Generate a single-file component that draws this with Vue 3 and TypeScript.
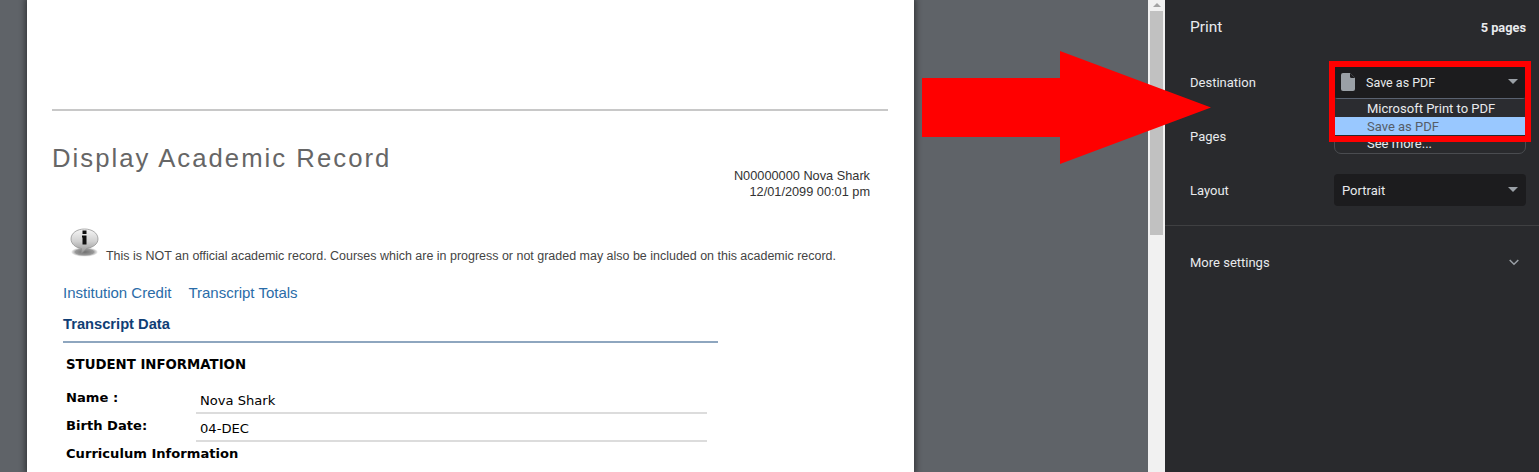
<template>
  <div class="viewer">
    <div class="preview">
      <main class="sheet">
        <hr class="top-rule" />
        <div class="title-row">
          <h1>Display Academic Record</h1>
          <div class="who">
            <div>N00000000 Nova Shark</div>
            <div>12/01/2099 00:01 pm</div>
          </div>
        </div>
        <div class="notice">
          <svg class="info" width="30" height="30" viewBox="0 0 30 30">
            <defs>
              <linearGradient id="bub" x1="0" y1="0" x2="0" y2="1">
                <stop offset="0" stop-color="#f6f6f6" />
                <stop offset="0.5" stop-color="#d0d0d0" />
                <stop offset="1" stop-color="#8d8d8d" />
              </linearGradient>
              <radialGradient id="shade">
                <stop offset="0" stop-color="#6f6f6f" />
                <stop offset="0.7" stop-color="#999" />
                <stop offset="1" stop-color="#bbb" stop-opacity="0.3" />
              </radialGradient>
            </defs>
            <ellipse cx="14.500" cy="24" rx="13" ry="4.500" fill="url(#shade)" />
            <path d="M14.500 1C7 1 1 5 1 11c0 5 5 9 10.500 9.500L11 26l6-5.600C23 19.500 28 16 28 11 28 5 22 1 14.500 1z" fill="url(#bub)" stroke="#8a8a8a" stroke-width="0.7" />
            <rect x="12.500" y="2.500" width="4" height="3.500" fill="#111" />
            <path d="M12 7.500h4.500v9h-4v-7H12z" fill="#111" />
          </svg>
          <span>This is NOT an official academic record. Courses which are in progress or not graded may also be included on this academic record.</span>
        </div>
        <nav class="links">
          <a>Institution Credit</a>
          <a>Transcript Totals</a>
        </nav>
        <h2>Transcript Data</h2>
        <section class="record">
          <h3>STUDENT INFORMATION</h3>
          <div v-for="row in rows" :key="row.label" class="rec-row">
            <div class="rec-label">{{ row.label }}</div>
            <div class="rec-value">{{ row.value }}</div>
          </div>
          <h3 class="curriculum">Curriculum Information</h3>
        </section>
      </main>
    </div>

    <div class="scrollbar">
      <div class="up"></div>
      <div class="thumb"></div>
    </div>

    <aside class="side">
      <header class="side-head">
        <span class="print">Print</span>
        <span class="count">5 pages</span>
      </header>
      <div class="setting">
        <label>Destination</label>
        <div class="select">
          <svg class="doc" width="14" height="18" viewBox="0 0 14 18">
            <path d="M2 0h7l5 5v11a2 2 0 0 1-2 2H2a2 2 0 0 1-2-2V2a2 2 0 0 1 2-2z" fill="#9aa0a6" />
            <path d="M9 0v3.500A1.500 1.500 0 0 0 10.500 5H14z" fill="#1c1c1e" />
          </svg>
          <span class="dest">Save as PDF</span>
          <i class="caret"></i>
        </div>
      </div>
      <div class="setting">
        <label>Pages</label>
        <div class="select ghost"></div>
      </div>
      <div class="setting">
        <label>Layout</label>
        <div class="select"><span>Portrait</span><i class="caret"></i></div>
      </div>
      <div class="more">
        <span>More settings</span>
        <svg width="10" height="7" viewBox="0 0 10 7"><path d="M.7 1 5 5.300 9.300 1" fill="none" stroke="#9aa0a6" stroke-width="1.500" /></svg>
      </div>

      <div class="dropdown">
        <div class="opt top">Microsoft Print to PDF</div>
        <div class="opt sel">Save as PDF</div>
        <div class="opt">See more...</div>
      </div>
      <div class="red-box"></div>
    </aside>

    <svg class="arrow" width="290" height="113" viewBox="0 0 290 113">
      <path d="M0 27h138V0l151 56.500-151 56.500V86H0z" fill="#ff0000" />
    </svg>
  </div>
</template>

<script setup lang="ts">
const rows = [
  { label: "Name :", value: "Nova Shark" },
  { label: "Birth Date:", value: "04-DEC" },
];
</script>

<style>
html, body { margin: 0; overflow: hidden; }
</style>

<style scoped>
.viewer { position: relative; display: flex; width: 1539px; height: 472px; overflow: hidden; background: #5f6368; }
.preview { width: 1148px; padding-left: 27px; box-sizing: border-box; flex: none; }
.sheet { width: 887px; height: 472px; box-sizing: border-box; background: #fff; padding: 109px 0 0 25px; box-shadow: 0 0 6px 2px rgba(0,0,0,.45); font-family: "Liberation Sans", Arial, sans-serif; overflow: hidden; }
.top-rule { width: 836px; height: 2px; margin: 0; border: 0; background: #c8c8c8; }
.title-row { display: flex; width: 818px; justify-content: space-between; align-items: flex-start; }
h1 { margin: 32px 0 0; font-size: 25.700px; line-height: 30px; font-weight: 400; letter-spacing: 2.03px; color: #666; }
.who { margin-top: 57px; font-size: 12.750px; line-height: 16px; text-align: right; color: #333; }
.notice { display: flex; align-items: flex-end; margin: 26px 0 0 18px; font-size: 12.470px; color: #444; height: 38px; }
.info { flex: none; margin-right: 6px; margin-bottom: 6px; }
.notice span { line-height: 15px; }
.links { display: flex; gap: 17px; margin: 20px 0 0 11px; font-size: 15px; line-height: 18px; color: #2a6ca8; }
h2 { width: 655px; margin: 13px 0 0 11px; padding-bottom: 8px; border-bottom: 2px solid #8ea6bf; font-size: 14.700px; line-height: 18px; font-weight: 700; color: #0f3e75; }
.record { margin-left: 14px; width: 641px; font-family: "DejaVu Sans", Verdana, sans-serif; font-size: 13.100px; color: #000; }
h3 { margin: 13px 0 0; font-size: 13.300px; line-height: 18px; font-weight: 700; }
.rec-row { display: flex; height: 28px; }
.rec-row:first-of-type { margin-top: 12px; }
.rec-label { width: 130px; font-weight: 700; line-height: 18px; padding-top: 3px; box-sizing: border-box; }
.rec-value { flex: 1; height: 28px; box-sizing: border-box; border-bottom: 2px solid #dcdcdc; padding: 6px 0 0 4px; line-height: 18px; }
.curriculum { margin: 3px 0 0 0; font-size: 13.100px; }

.scrollbar { width: 17px; flex: none; background: #f1f1f1; }
.up { width: 0; height: 0; margin: 3px auto 0; border: 4px solid transparent; border-top: 0; border-bottom: 4px solid #a3a3a3; }
.thumb { height: 224px; margin: 4px 0 0 2px; width: 13px; background: #c1c1c1; }

.side { position: relative; flex: 1; background: #292a2d; color: #e8eaed; font-family: Roboto, "Open Sans", sans-serif; font-size: 13px; }
.side-head { display: flex; justify-content: space-between; align-items: center; height: 54px; padding: 0 13px 0 25px; }
.print { font-size: 15.500px; }
.count { font-size: 12.800px; font-weight: 700; }
.setting { display: flex; align-items: center; height: 32px; padding-left: 25px; margin-bottom: 22px; }
.setting:first-of-type { margin-top: 12px; }
.setting label { width: 144px; }
.select { display: flex; align-items: center; width: 192px; height: 32px; box-sizing: border-box; padding: 0 8px; border-radius: 4px; background: #1c1c1e; position: relative; }
.doc { margin: 0 11px 0 -1px; }
.dest { font-size: 12.500px; }
.caret { position: absolute; right: 8px; top: 13px; width: 0; height: 0; border: 5px solid transparent; border-bottom: 0; border-top: 5px solid #9aa0a6; }
.ghost { background: transparent; border: 1px solid #4a4c50; border-radius: 7px; height: 34px; align-self: flex-start; }
.more { display: flex; justify-content: space-between; align-items: center; height: 74px; margin-top: -3px; padding: 0 20px 0 25px; border-top: 1px solid #3f4042; box-sizing: border-box; }
.dropdown { position: absolute; left: 169px; top: 98px; width: 192px; box-sizing: border-box; border-radius: 4px; border-top: 1px solid #5a6270; }
.opt { height: 18px; line-height: 18px; padding-left: 33px; }
.top { background: #2b2c30; line-height: 20px; }
.sel { background: #99c8ff; color: #555d68; line-height: 20px; }
.red-box { position: absolute; left: 164px; top: 61px; width: 202px; height: 81px; box-sizing: border-box; border: 6px solid #ff0000; }
.arrow { position: absolute; left: 922px; top: 51px; }
</style>
